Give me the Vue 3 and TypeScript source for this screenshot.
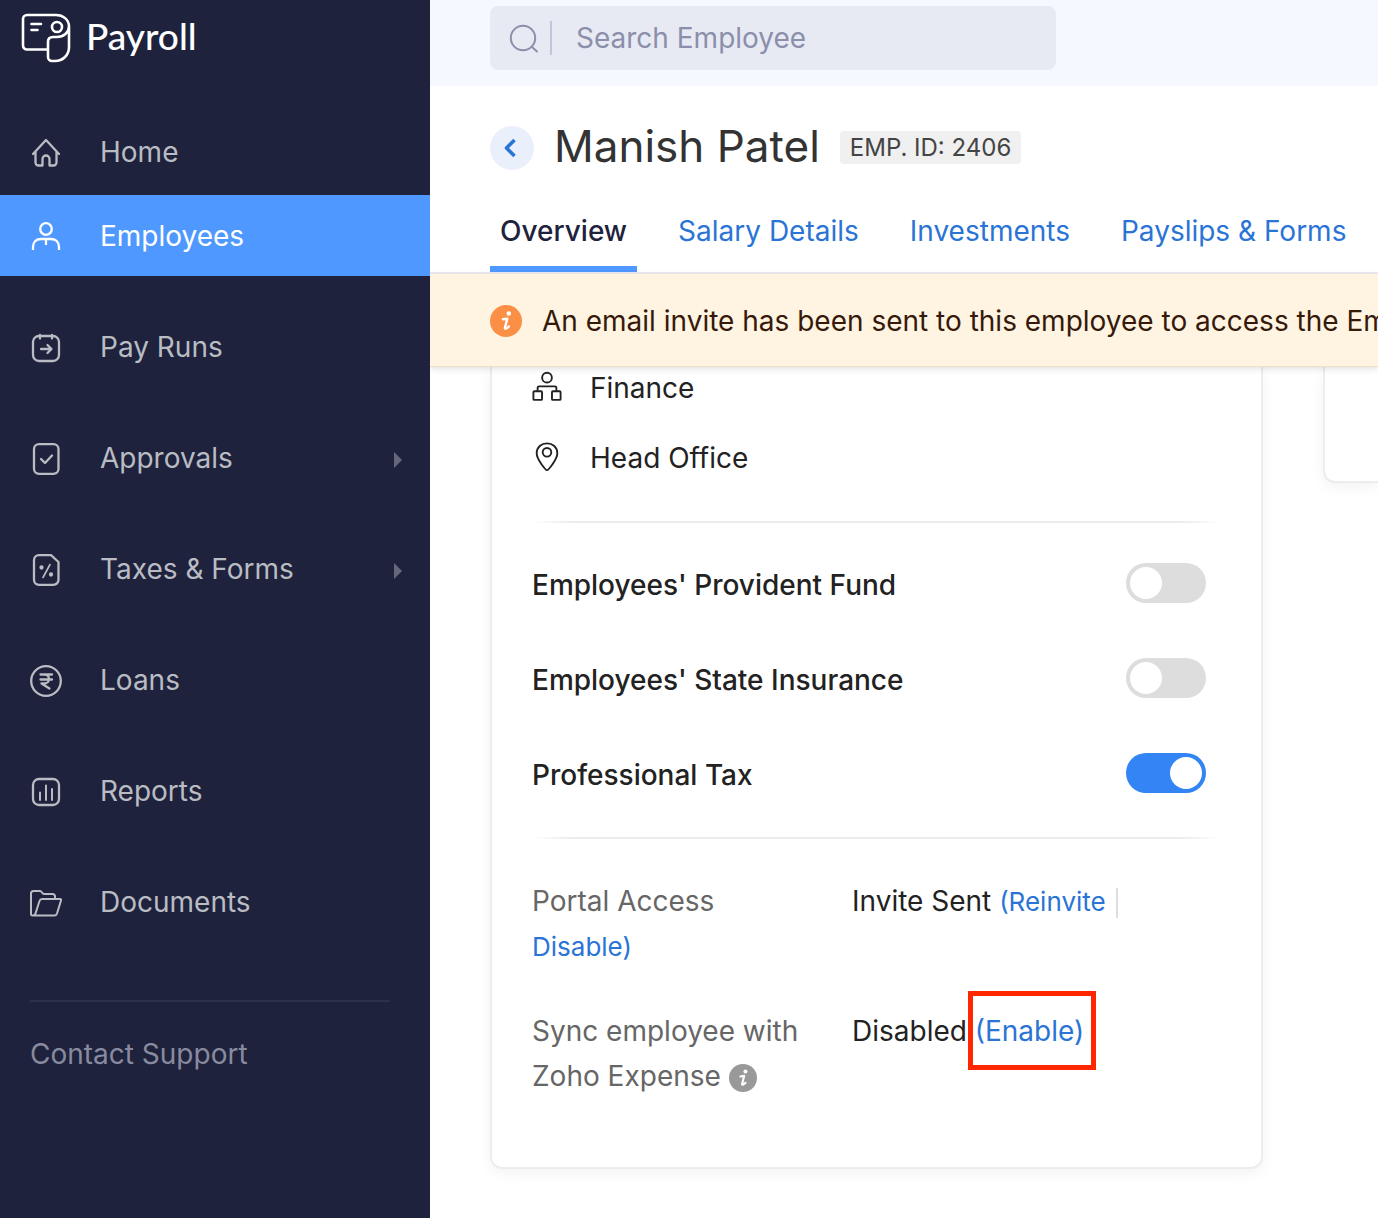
<script setup lang="ts">
import { ref } from 'vue'

interface NavItem {
  label: string
  icon: string
  active?: boolean
  expandable?: boolean
}

interface Statutory {
  id: string
  label: string
  enabled: boolean
}

const navItems: NavItem[] = [
  { label: 'Home', icon: 'home' },
  { label: 'Employees', icon: 'employees', active: true },
  { label: 'Pay Runs', icon: 'payruns' },
  { label: 'Approvals', icon: 'approvals', expandable: true },
  { label: 'Taxes & Forms', icon: 'taxes', expandable: true },
  { label: 'Loans', icon: 'loans' },
  { label: 'Reports', icon: 'reports' },
  { label: 'Documents', icon: 'documents' },
]

const tabs: string[] = ['Overview', 'Salary Details', 'Investments', 'Payslips & Forms']

const statutory = ref<Statutory[]>([
  { id: 'epf', label: "Employees' Provident Fund", enabled: false },
  { id: 'esi', label: "Employees' State Insurance", enabled: false },
  { id: 'pt', label: 'Professional Tax', enabled: true },
])
</script>

<template>
  <div class="app">
    <aside class="sidebar">
      <a class="brand" href="#">
        <svg class="brand-icon" viewBox="0 0 50 50" fill="none" stroke="currentColor" stroke-width="2.6" stroke-linecap="round" stroke-linejoin="round" aria-hidden="true">
          <path d="M27 36.500H6A4 4 0 0 1 2 32.500V6A4 4 0 0 1 6 2H35C42 2 48 6.500 48 13.500V34C48 42 42 48 34 48H31A4 4 0 0 1 27 44V29C27 25.500 29 24 32 24H36C42.500 24 48 19.500 48 13.500" />
          <circle cx="36" cy="14" r="5" />
          <path d="M10.500 11H20M10.500 17H16.500" />
        </svg>
        <span class="brand-name">Payroll</span>
      </a>
      <nav class="nav">
        <a v-for="item in navItems" :key="item.label" href="#" class="nav-item" :class="{ active: item.active }">
          <svg class="nav-icon" viewBox="0 0 32 32" fill="none" stroke="currentColor" stroke-width="2.300" stroke-linecap="round" stroke-linejoin="round" aria-hidden="true">
            <template v-if="item.icon === 'home'">
              <path d="M3 17L16 3L29 17M5.500 15V25.500A3 3 0 0 0 8.500 28.500H12.500V22A3.500 3.500 0 0 1 19.500 22V28.500H23.500A3 3 0 0 0 26.500 25.500V15" />
            </template>
            <template v-else-if="item.icon === 'employees'">
              <circle cx="16" cy="8" r="5.800" />
              <path d="M3 29V26C3 21 6.500 18 11 18H21C25.500 18 29 21 29 26V29M16 18V24" stroke-linecap="butt" />
            </template>
            <template v-else-if="item.icon === 'payruns'">
              <rect x="3" y="4" width="26" height="25" rx="6" />
              <path d="M10 3V6.500M22 3V6.500M11 17H21M17.500 13L21.500 17L17.500 21" />
            </template>
            <template v-else-if="item.icon === 'approvals'">
              <rect x="4" y="1.200" width="24.500" height="29.600" rx="5" />
              <path d="M11 16L15 20L22 12.500" />
            </template>
            <template v-else-if="item.icon === 'taxes'">
              <path d="M9 1.200H21L28.500 8V25.800A5 5 0 0 1 23.500 30.800H9A5 5 0 0 1 4 25.800V6.200A5 5 0 0 1 9 1.200Z" />
              <path d="M20 10.500L13 23.500" stroke-width="1.600" />
              <circle cx="11.500" cy="13.500" r="1" fill="currentColor" />
              <circle cx="21" cy="20.500" r="1" fill="currentColor" />
            </template>
            <template v-else-if="item.icon === 'loans'">
              <circle cx="16" cy="16" r="14.800" />
              <path d="M10.500 9.500H22M10.500 14.500H22M10.500 9.500H14.500C20.500 9.500 20.500 18.500 14.500 18.500H11.500L19.500 23.500" />
            </template>
            <template v-else-if="item.icon === 'reports'">
              <rect x="3" y="3" width="26" height="26" rx="6" />
              <path d="M10 16.500V24M16 9.500V24M22 13V24" stroke-width="2" />
            </template>
            <template v-else>
              <path d="M2.500 28.500C1.500 28.500 1 28 1 27V6.500C1 5 2 4 3.500 4H10C12 4 12 7 14 7H22.500C24 7 25 8 25 9.500V12M2.500 28.500H24.500C26 28.500 26.500 28 27 26.500L31 13.500C31.300 12.500 31 12 30 12H12C10.500 12 10 12.500 9.500 14L5.500 26.500C5 28 4.500 28.500 2.500 28.500Z" stroke-width="2" />
            </template>
          </svg>
          <span class="nav-label">{{ item.label }}</span>
          <svg v-if="item.expandable" class="nav-caret" viewBox="0 0 8 16" aria-hidden="true"><path d="M0 0L8 8L0 16Z" fill="currentColor" /></svg>
        </a>
      </nav>
      <a class="support" href="#">Contact Support</a>
    </aside>

    <main class="main">
      <header class="topbar">
        <label class="search">
          <svg class="search-icon" viewBox="0 0 32 32" fill="none" stroke="currentColor" stroke-width="2" stroke-linecap="round" aria-hidden="true">
            <circle cx="15" cy="16" r="12.200" />
            <path d="M24 25L29 29.500" />
          </svg>
          <input type="search" placeholder="Search Employee" aria-label="Search Employee" />
        </label>
      </header>

      <div class="title-row">
        <button class="back" type="button" aria-label="Back">
          <svg viewBox="0 0 14 20" fill="none" stroke="currentColor" stroke-width="3.600" stroke-linejoin="round" aria-hidden="true"><path d="M11.500 2L3.500 10L11.500 18" /></svg>
        </button>
        <h1>Manish Patel</h1>
        <span class="emp-id">EMP. ID: 2406</span>
      </div>

      <nav class="tabs">
        <a v-for="(tab, i) in tabs" :key="tab" href="#" class="tab" :class="{ current: i === 0 }">{{ tab }}</a>
      </nav>

      <div class="banner">
        <svg class="info-warn" viewBox="0 0 32 32" aria-hidden="true">
          <circle cx="16" cy="16" r="16" fill="currentColor" />
          <circle cx="18.800" cy="8.500" r="2.300" fill="#fff" />
          <path d="M13 14.300L17.300 13.600L15 22.500C14.600 24.500 16.500 24 18.800 21.500" fill="none" stroke="#fff" stroke-width="2.400" stroke-linejoin="round" stroke-linecap="round" />
        </svg>
        <span class="banner-text">An email invite has been sent to this employee to access the Employee Portal.</span>
      </div>

      <div class="content">
        <section class="card profile">
          <ul class="facts">
            <li>
              <svg viewBox="0 0 32 32" fill="none" stroke="currentColor" stroke-width="2" stroke-linejoin="round" aria-hidden="true">
                <circle cx="16" cy="6" r="5.200" />
                <rect x="1.500" y="20.500" width="9.200" height="9.200" rx="1" />
                <rect x="21.300" y="20.500" width="9.200" height="9.200" rx="1" />
                <path d="M6 20.500V16.800Q6 15.300 7.500 15.300H24.500Q26 15.300 26 16.800V20.500" />
              </svg>
              <span>Finance</span>
            </li>
            <li>
              <svg viewBox="0 0 32 32" fill="none" stroke="currentColor" stroke-width="2" stroke-linejoin="round" aria-hidden="true">
                <path d="M16 30C14.500 30 5 18.500 5 12C5 5.500 10 1.500 16 1.500S27 5.500 27 12C27 18.500 17.500 30 16 30Z" />
                <circle cx="16" cy="11" r="4.600" />
              </svg>
              <span>Head Office</span>
            </li>
          </ul>
          <hr class="rule" />
          <div class="switches">
            <label v-for="item in statutory" :key="item.id" class="switch-row" :for="item.id">
              <span>{{ item.label }}</span>
              <input :id="item.id" v-model="item.enabled" type="checkbox" class="switch" />
            </label>
          </div>
          <hr class="rule" />
          <div class="access">
            <p>
              <span class="key">Portal Access</span>Invite Sent <a class="small" href="#">(Reinvite</a><span class="bar"></span><br />
              <a class="small" href="#">Disable)</a>
            </p>
            <p>
              <span class="key">Sync employee with Zoho Expense
                <svg class="info-muted" viewBox="0 0 32 32" role="img" aria-label="More information">
                  <circle cx="16" cy="16" r="16" fill="currentColor" />
                  <circle cx="18.800" cy="8.500" r="2.300" fill="#fff" />
                  <path d="M13 14.300L17.300 13.600L15 22.500C14.600 24.500 16.500 24 18.800 21.500" fill="none" stroke="#fff" stroke-width="2.400" stroke-linejoin="round" stroke-linecap="round" />
                </svg></span>Disabled <a class="marked" href="#">(Enable)</a>
            </p>
          </div>
        </section>
        <section class="card side" aria-label="Salary summary"></section>
      </div>
    </main>
  </div>
</template>

<style>
body {
  margin: 0;
  background: #fff;
}
</style>

<style scoped>
.app {
  display: flex;
  min-height: 100vh;
  font-family: Inter, "Liberation Sans", sans-serif;
  font-optical-sizing: none;
  font-size: 28px;
  line-height: 44px;
  color: #222;
}
a {
  color: #2a74d6;
  text-decoration: none;
}
.sidebar {
  flex: 0 0 430px;
  background: #1f223c;
}
.brand {
  display: flex;
  align-items: center;
  gap: 15px;
  height: 76px;
  padding-left: 21px;
  color: #fff;
}
.brand-icon {
  width: 50px;
  height: 50px;
}
.brand-name {
  padding-bottom: 4px;
  font-family: Lato, sans-serif;
  font-size: 37px;
  font-weight: 500;
}
.nav {
  display: flex;
  flex-direction: column;
  gap: 30px;
  margin: 35px 0 58px;
}
.nav-item {
  display: flex;
  align-items: center;
  gap: 38px;
  height: 81px;
  padding: 2px 28px 0 30px;
  box-sizing: border-box;
  color: #b9bcc3;
}
.nav-item.active {
  margin-top: -27px;
  background: #4f98ff;
  color: #fff;
}
.nav-icon {
  width: 32px;
  height: 32px;
}
.nav-label {
  flex: 1;
  padding-bottom: 2px;
}
.nav-caret {
  width: 8px;
  height: 16px;
  padding-top: 2px;
  color: #65687b;
}
.support {
  display: block;
  margin: 0 40px 0 30px;
  padding-top: 30px;
  border-top: 2px solid #2d3049;
  color: #888b9f;
}
.main {
  flex: 1;
  min-width: 0;
  overflow: hidden;
}
.topbar {
  height: 86px;
  padding: 6px 60px 0;
  box-sizing: border-box;
  background: #f5f8ff;
}
.search {
  display: flex;
  align-items: center;
  max-width: 566px;
  height: 64px;
  border-radius: 8px;
  background: #e7eaf3;
  color: #8b8fab;
}
.search-icon {
  width: 32px;
  height: 32px;
  margin: 0 10px 0 18px;
}
.search input {
  flex: 1;
  min-width: 0;
  height: 34px;
  padding: 0 0 0 24px;
  border: 0;
  border-left: 2px solid #c3c6d8;
  outline: 0;
  background: none;
  font: inherit;
  color: inherit;
}
.search input::placeholder {
  color: #8b8fab;
  opacity: 1;
}
.title-row {
  display: flex;
  align-items: center;
  gap: 20px;
  height: 123px;
  padding-left: 60px;
}
.back {
  display: grid;
  place-items: center;
  width: 44px;
  height: 44px;
  padding: 0 4px 0 0;
  border: 0;
  border-radius: 50%;
  background: #e9f0fc;
  color: #2a74d6;
}
.back svg {
  width: 14px;
  height: 20px;
}
h1 {
  margin: 0;
  padding-bottom: 4px;
  font-size: 44px;
  font-weight: 400;
  color: #333;
}
.emp-id {
  padding: 0 10px;
  border-radius: 4px;
  background: #f0f0f0;
  font-size: 24px;
  line-height: 33px;
  color: #444;
}
.tabs {
  display: flex;
  gap: 31px;
  padding-left: 60px;
  border-bottom: 2px solid #ebeaf0;
  white-space: nowrap;
}
.tab {
  padding: 0 10px 13px;
  border-bottom: 6px solid transparent;
}
.tab.current {
  border-color: #4f98ff;
  font-weight: 500;
  color: #1f223c;
}
.banner {
  position: relative;
  z-index: 1;
  display: flex;
  align-items: center;
  gap: 20px;
  height: 93px;
  padding: 1px 0 0 60px;
  border-bottom: 1px solid #eee0c8;
  box-sizing: border-box;
  background: #fef4e1;
  box-shadow: 0 2px 6px rgba(0, 0, 0, 0.12);
  white-space: nowrap;
  color: #36190a;
}
.info-warn {
  flex: none;
  width: 32px;
  height: 32px;
  color: #fa8f45;
}
.info-muted {
  width: 28px;
  height: 28px;
  vertical-align: -6px;
  color: #999;
}
.content {
  display: grid;
  grid-template-columns: 773px minmax(0, 1fr);
  gap: 60px;
  align-items: start;
  padding-left: 60px;
}
.card {
  box-sizing: border-box;
  border: 2px solid #ededed;
  border-top: 0;
  border-radius: 0 0 12px 12px;
  background: #fff;
  box-shadow: 0 4px 14px rgba(0, 0, 0, 0.05);
}
.profile {
  padding: 0 40px 68px;
}
.side {
  height: 116px;
  border-right: 0;
  border-radius: 0 0 0 12px;
}
.facts {
  display: flex;
  flex-direction: column;
  gap: 26px;
  margin: 0;
  padding: 0 0 40px;
  list-style: none;
}
.facts li {
  display: flex;
  align-items: center;
  gap: 28px;
}
.facts span {
  padding-bottom: 1px;
  line-height: 43px;
}
.facts svg {
  width: 30px;
  height: 32px;
  margin-bottom: 4px;
}
.rule {
  height: 2px;
  margin: 0;
  border: 0;
  background: linear-gradient(90deg, transparent, #ececec 6%, #ececec 94%, transparent);
}
.switches {
  display: flex;
  flex-direction: column;
  gap: 51px;
  padding: 40px 15px 40px 0;
}
.switch-row {
  display: flex;
  align-items: center;
  justify-content: space-between;
  font-weight: 500;
}
.switch {
  appearance: none;
  width: 80px;
  height: 40px;
  margin: 0 0 4px;
  padding: 4px;
  box-sizing: border-box;
  border-radius: 20px;
  background: #ddd;
}
.switch::before {
  content: "";
  display: block;
  width: 32px;
  height: 32px;
  border-radius: 50%;
  background: #fff;
}
.switch:checked {
  background: #3384f5;
}
.switch:checked::before {
  margin-left: 40px;
}
.access {
  display: flex;
  flex-direction: column;
  gap: 40px;
  padding-top: 40px;
  line-height: 45px;
}
.access p {
  margin: 0;
}
.key {
  display: inline-block;
  width: 280px;
  margin-right: 40px;
  vertical-align: top;
  color: #666;
}
.small {
  font-size: 26px;
}
.bar {
  display: inline-block;
  width: 2px;
  height: 30px;
  margin-left: 10px;
  vertical-align: middle;
  background: #ddd;
}
.marked {
  position: relative;
}
.marked::after {
  content: "";
  position: absolute;
  inset: -23px -12px -22px -7px;
  border: 5px solid #ff2600;
}
</style>
